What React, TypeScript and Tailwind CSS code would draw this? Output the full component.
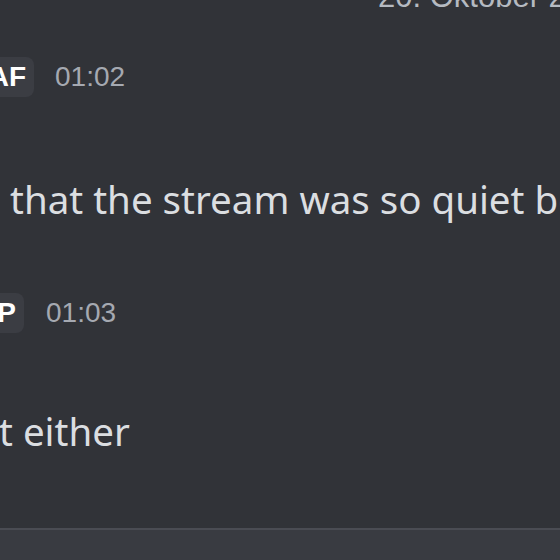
import React from "react";

const Header = ({ tag, time, tagW, timeX }: { tag: string; time: string; tagW: string; timeX: string }) => (
  <div className="flex items-center h-[40px]">
    <div className={`${tagW} h-[40px] bg-[#3b3d43] rounded-r-[8px] flex items-center justify-end pr-[8px] text-white font-bold text-[28px] leading-none font-['Liberation_Sans',sans-serif] overflow-hidden`}>
      {tag}
    </div>
    <span className={`${timeX} text-[#a5a9b1] text-[28px] leading-none font-['Liberation_Sans',sans-serif]`}>{time}</span>
  </div>
);

export default function App() {
  return (
    <div className="w-[560px] h-[560px] overflow-hidden bg-[#313338] flex flex-col">
      <div className="h-[14px] overflow-hidden flex items-end">
        <span className="ml-[378px] whitespace-nowrap text-[31px] leading-[31px] text-[#b5bac1] font-['Liberation_Sans',sans-serif] mb-[2px]">
          20. Oktober 2023
        </span>
      </div>
      <div className="mt-[43px]">
        <Header tag="AF" time="01:02" tagW="w-[34px]" timeX="ml-[21px]" />
      </div>
      <div className="mt-[82px] whitespace-nowrap text-[38.5px] leading-[40px] text-[#dbdee1] font-['Noto_Sans',sans-serif] ml-[10px]">
        that the stream was so quiet before
      </div>
      <div className="mt-[74px]">
        <Header tag="P" time="01:03" tagW="w-[24px]" timeX="ml-[22px]" />
      </div>
      <div className="mt-[78px] whitespace-nowrap text-[38.5px] leading-[40px] text-[#dbdee1] font-['Noto_Sans',sans-serif] -ml-[1px]">
        t either
      </div>
      <div className="flex-1" />
      <div className="h-[32px] shrink-0 bg-[#393b41] border-t-[2px] border-[#4a4c53]" />
    </div>
  );
}
